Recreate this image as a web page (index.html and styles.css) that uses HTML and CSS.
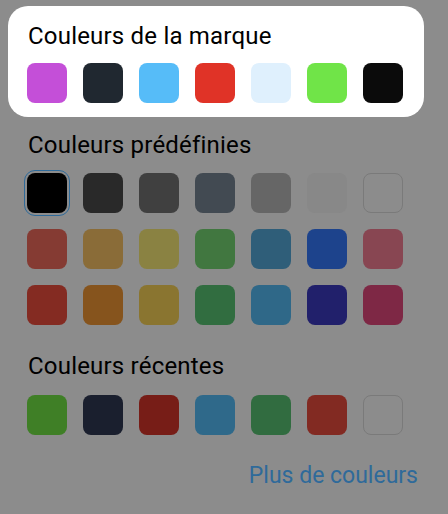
FILE: index.html
```html
<!DOCTYPE html>
<html lang="fr">
<head>
<meta charset="utf-8">
<link rel="stylesheet" href="styles.css">
</head>
<body>
<div class="panel">
  <section class="card">
    <h2 class="title">Couleurs de la marque</h2>
    <div class="grid">
      <span class="sw" style="background:#c44fd8"></span>
      <span class="sw" style="background:#202830"></span>
      <span class="sw" style="background:#56bcf8"></span>
      <span class="sw" style="background:#e03327"></span>
      <span class="sw" style="background:#dff0fd"></span>
      <span class="sw" style="background:#70e448"></span>
      <span class="sw" style="background:#0b0b0b"></span>
    </div>
  </section>

  <section class="group predef">
    <h2 class="title">Couleurs prédéfinies</h2>
    <div class="grid">
      <span class="sw selected" style="background:#000000"></span>
      <span class="sw" style="background:#292929"></span>
      <span class="sw" style="background:#404040"></span>
      <span class="sw" style="background:#424a52"></span>
      <span class="sw" style="background:#666666"></span>
      <span class="sw" style="background:#888888"></span>
      <span class="sw empty"></span>
      <span class="sw" style="background:#853b33"></span>
      <span class="sw" style="background:#8a6c38"></span>
      <span class="sw" style="background:#8a8242"></span>
      <span class="sw" style="background:#417740"></span>
      <span class="sw" style="background:#2f5e79"></span>
      <span class="sw" style="background:#1d438c"></span>
      <span class="sw" style="background:#884652"></span>
      <span class="sw" style="background:#842b22"></span>
      <span class="sw" style="background:#86541d"></span>
      <span class="sw" style="background:#8a7530"></span>
      <span class="sw" style="background:#316d40"></span>
      <span class="sw" style="background:#2f6888"></span>
      <span class="sw" style="background:#21206b"></span>
      <span class="sw" style="background:#7e2845"></span>
    </div>
  </section>

  <section class="group recent">
    <h2 class="title">Couleurs récentes</h2>
    <div class="grid">
      <span class="sw" style="background:#3f7f26"></span>
      <span class="sw" style="background:#1a1f2e"></span>
      <span class="sw" style="background:#771d17"></span>
      <span class="sw" style="background:#2f698a"></span>
      <span class="sw" style="background:#316c40"></span>
      <span class="sw" style="background:#822a22"></span>
      <span class="sw empty"></span>
    </div>
  </section>

  <div class="footer">
    <a class="more" href="#">Plus de couleurs</a>
  </div>
</div>
</body>
</html>
```
FILE: styles.css
```css
html, body {
  margin: 0;
  padding: 0;
  background: #8c8c8c;
}
body {
  width: 448px;
  height: 514px;
  overflow: hidden;
  font-family: Roboto, "Noto Sans", sans-serif;
  color: #000;
}
.panel {
  padding: 6px 24px 0 8px;
}
.card {
  background: #fff;
  border-radius: 20px;
  padding: 16px 19px 14px 19px;
}
.title {
  margin: 0;
  font-size: 24px;
  font-weight: 400;
  line-height: 28px;
  letter-spacing: 0.2px;
  padding-left: 1px;
}
.grid {
  display: grid;
  grid-template-columns: repeat(7, 40px);
  column-gap: 16px;
  row-gap: 16px;
}
.card .grid {
  margin-top: 13px;
}
.group {
  padding: 0 19px;
}
.predef {
  margin-top: 14px;
}
.predef .grid {
  margin-top: 14px;
}
.recent {
  margin-top: 27px;
}
.recent .grid {
  margin-top: 15px;
}
.sw {
  display: block;
  width: 40px;
  height: 40px;
  border-radius: 8px;
  box-sizing: border-box;
}
.sw.empty {
  border: 1px solid #7a7a7a;
  background: transparent;
}
.sw.selected {
  outline: 1.5px solid #2e6a9a;
  outline-offset: 2px;
}
.footer {
  display: flex;
  justify-content: flex-end;
  margin-top: 27px;
  padding-right: 6px;
}
.more {
  font-size: 23px;
  line-height: 27px;
  color: #2f6a9a;
  text-decoration: none;
}
```
